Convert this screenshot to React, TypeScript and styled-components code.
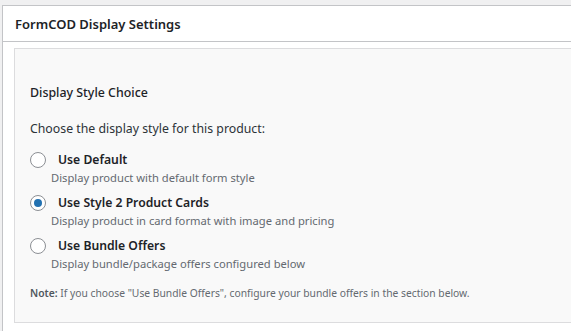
import React from "react";
import styled, { createGlobalStyle } from "styled-components";

const Global = createGlobalStyle`
  html, body { margin: 0; padding: 0; background: #f0f0f1; }
  body { font-family: "Noto Sans", "Open Sans", sans-serif; color: #3c434a; overflow: hidden; }
`;

const Postbox = styled.div`
  margin: 5px 0 0 2px;
  width: 620px;
  background: #fff;
  border: 1px solid #c3c4c7;
`;

const Header = styled.div`
  height: 35px;
  display: flex;
  align-items: center;
  padding: 0 12px;
  border-bottom: 1px solid #c3c4c7;
  font-size: 13px;
  font-weight: 600;
  color: #1d2327;
`;

const Inside = styled.div`
  padding: 6px 12px 12px 11px;
`;

const Panel = styled.div`
  background: #f9f9f9;
  border: 1px solid #dcdcde;
  padding: 34px 15px 22px 15px;
  height: 275px;
  box-sizing: border-box;
`;

const Title = styled.h3`
  margin: 0 0 16px 0;
  font-size: 12.4px;
  font-weight: 500;
  color: #1d2327;
  line-height: 20px;
`;

const Lead = styled.p`
  margin: 0 0 11px 0;
  font-size: 12.3px;
  line-height: 20px;
  color: #2c3338;
`;

const Options = styled.div`
  display: flex;
  flex-direction: column;
  gap: 6px;
`;

const Option = styled.label`
  display: grid;
  grid-template-columns: 16px 1fr;
  column-gap: 12px;
  row-gap: 0;
  align-items: center;
`;

const Radio = styled.span<{ $checked?: boolean }>`
  width: 16px;
  height: 16px;
  box-sizing: border-box;
  border-radius: 50%;
  border: 1px solid #8c8f94;
  background: #fff;
  display: flex;
  align-items: center;
  justify-content: center;
  &::after {
    content: "";
    display: ${(p) => (p.$checked ? "block" : "none")};
    width: 8px;
    height: 8px;
    border-radius: 50%;
    background: #2271b1;
  }
`;

const OptionLabel = styled.span`
  font-size: 12.2px;
  font-weight: 600;
  color: #1d2327;
  line-height: 20px;
`;

const OptionDesc = styled.span`
  grid-column: 2;
  margin-left: -7px;
  margin-top: -1px;
  font-size: 11.2px;
  color: #646970;
  line-height: 18px;
`;

const Note = styled.p`
  margin: 11px 0 0 0;
  font-size: 10.3px;
  color: #646970;
  line-height: 18px;
  strong { font-weight: 600; color: #50575e; }
`;

const options = [
  { label: "Use Default", desc: "Display product with default form style", checked: false },
  { label: "Use Style 2 Product Cards", desc: "Display product in card format with image and pricing", checked: true },
  { label: "Use Bundle Offers", desc: "Display bundle/package offers configured below", checked: false },
];

export default function App() {
  return (
    <>
      <Global />
      <Postbox>
        <Header>FormCOD Display Settings</Header>
        <Inside>
          <Panel>
            <Title>Display Style Choice</Title>
            <Lead>Choose the display style for this product:</Lead>
            <Options>
              {options.map((o) => (
                <Option key={o.label}>
                  <Radio $checked={o.checked} />
                  <OptionLabel>{o.label}</OptionLabel>
                  <OptionDesc>{o.desc}</OptionDesc>
                </Option>
              ))}
            </Options>
            <Note>
              <strong>Note:</strong> If you choose "Use Bundle Offers", configure your bundle offers in the section below.
            </Note>
          </Panel>
        </Inside>
      </Postbox>
    </>
  );
}
